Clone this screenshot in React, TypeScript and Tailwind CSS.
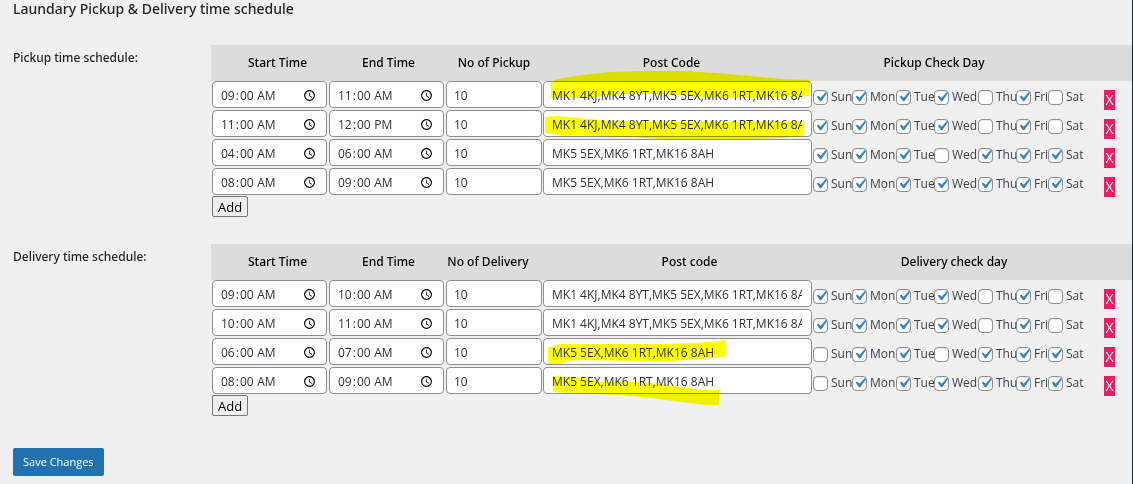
import {useId, useState} from "react";
import clsx from "clsx";

type Slot = {
    start: string,
    end: string,
    limit: string,
    postCodes: string,
    days: boolean[]
}

type Header = {
    label: string,
    className?: string
}

const DAYS = [ "Sun", "Mon", "Tue", "Wed", "Thu", "Fri", "Sat" ];

const ALL_CODES = "MK1 4KJ,MK4 8YT,MK5 5EX,MK6 1RT,MK16 8AH";
const SHORT_CODES = "MK5 5EX,MK6 1RT,MK16 8AH";

// "1101" -> [true, true, false, true]
const days = (mask: string) => mask.split("").map(c => c === "1");

const pickupSlots: Slot[] = [
    { start: "09:00", end: "11:00", limit: "10", postCodes: ALL_CODES, days: days("1111010") },
    { start: "11:00", end: "12:00", limit: "10", postCodes: ALL_CODES, days: days("1111010") },
    { start: "04:00", end: "06:00", limit: "10", postCodes: SHORT_CODES, days: days("1110111") },
    { start: "08:00", end: "09:00", limit: "10", postCodes: SHORT_CODES, days: days("1111111") },
];

const deliverySlots: Slot[] = [
    { start: "09:00", end: "10:00", limit: "10", postCodes: ALL_CODES, days: days("1111010") },
    { start: "10:00", end: "11:00", limit: "10", postCodes: ALL_CODES, days: days("1111010") },
    { start: "06:00", end: "07:00", limit: "10", postCodes: SHORT_CODES, days: days("0110111") },
    { start: "08:00", end: "09:00", limit: "10", postCodes: SHORT_CODES, days: days("0111111") },
];

const pickupHeaders: Header[] = [
    { label: "Start Time", className: "pl-4" },
    { label: "End Time", className: "pl-1" },
    { label: "No of Pickup" },
    { label: "Post Code", className: "pr-3" },
    { label: "Pickup Check Day", className: "pr-10" },
];

const deliveryHeaders: Header[] = [
    { label: "Start Time", className: "pl-4" },
    { label: "End Time", className: "pl-1" },
    { label: "No of Delivery", className: "pr-3" },
    { label: "Post code", className: "pl-6" },
    { label: "Delivery check day" },
];

// marker strokes, in pixels from the table's top left corner
const pickupMarks = [
    "M340 37 L346 34 L370 30 L400 27 L430 26 L475 26 L505 28 L540 31 L570 34 L599 35 V51 L540 53 L500 53 L470 50 L440 49 L410 49 L395 51 L380 53 H340 Z",
    "M334 72 L345 71 L368 73 L400 76 L440 77 L500 77 L593 76 V91 L570 93 L540 94 H450 L420 92 L380 91 L350 90 L334 88 Z",
];

const deliveryMarks = [
    "M337 104 L350 100 H450 L480 99 L500 98 L514 96 V113 L490 115 L460 117 L420 117 L370 116 L356 117 L350 120 L337 120 Z",
    "M342 132 L372 134 L390 138 L420 138 L440 139 L470 143 L490 146 L508 146 V161 L495 161 L470 158 L440 154 L410 151 L380 150 L342 148 Z",
];

const inputClass = "block h-[27px] w-full rounded-sm border border-[#8c8f94] bg-white pt-0.5 text-xs text-[#2c3338] outline-none focus:border-[#2271b1]";

function DayCheckbox({ label, checked, onChange }: { label: string, checked: boolean, onChange: () => void }) {
    return (
        <label className="flex items-center gap-[3px] whitespace-nowrap">
            <span className="grid shrink-0 place-items-center">
                <input
                    type="checkbox"
                    className="col-start-1 row-start-1 size-[15px] appearance-none rounded-sm border border-[#8c8f94] bg-white shadow-[inset_0_1px_2px_rgba(0,0,0,0.1)]"
                    checked={checked}
                    onChange={onChange}
                />
                {checked && (
                    <svg viewBox="0 0 20 20" className="pointer-events-none col-start-1 row-start-1 size-5 fill-[#3582c4] -m-1">
                        <path d="M14.83 4.89l1.34.94-5.81 8.38H9.02L5.78 9.67l1.34-1.25 2.57 2.4z" />
                    </svg>
                )}
            </span>
            {label}
        </label>
    );
}

function Schedule({ title, headers, initial, marks }: { title: string, headers: Header[], initial: Slot[], marks: string[] }) {

    const titleId = useId();
    const [ slots, setSlots ] = useState(initial);

    const update = (index: number, change: Partial<Slot>) => {
        setSlots(prev => prev.map((slot, i) => i === index ? { ...slot, ...change } : slot));
    };

    const addSlot = () => {
        setSlots(prev => [ ...prev, { start: "", end: "", limit: "", postCodes: "", days: days("0000000") } ]);
    };

    return (
        <section className="flex items-start">
            <h2 id={titleId} className="w-[198px] shrink-0 pt-[5px] font-['Noto_Sans',sans-serif] text-xs font-medium text-[#1d2327]">{title}</h2>

            <div className="relative min-w-0 flex-1">
                <table aria-labelledby={titleId} className="w-full table-fixed border-collapse text-xs">
                    <colgroup>
                        <col className="w-[117px]" />
                        <col className="w-[117px]" />
                        <col className="w-[98px]" />
                        <col className="w-[269px]" />
                        <col />
                        <col className="w-9" />
                    </colgroup>
                    <thead className="font-['Noto_Sans',sans-serif]">
                        <tr className="h-9 bg-[#dcdcdc] text-black">
                            {headers.map(header => (
                                <th key={header.label} className={clsx("font-medium whitespace-nowrap", header.className)}>
                                    {header.label}
                                </th>
                            ))}
                            <td></td>
                        </tr>
                    </thead>
                    <tbody>
                        {slots.map((slot, index) => (
                            <tr key={index} className="h-[29px] align-top">
                                <td className="px-px">
                                    <input
                                        type="time"
                                        aria-label="Start time"
                                        className={clsx(inputClass, "pr-[7px] pl-[7px]")}
                                        value={slot.start}
                                        onChange={e => update(index, { start: e.currentTarget.value })}
                                    />
                                </td>
                                <td className="px-px">
                                    <input
                                        type="time"
                                        aria-label="End time"
                                        className={clsx(inputClass, "pr-[7px] pl-[7px]")}
                                        value={slot.end}
                                        onChange={e => update(index, { end: e.currentTarget.value })}
                                    />
                                </td>
                                <td className="px-px">
                                    <input
                                        type="text"
                                        aria-label="Limit"
                                        className={clsx(inputClass, "pr-[7px] pl-[7px]")}
                                        value={slot.limit}
                                        onChange={e => update(index, { limit: e.currentTarget.value })}
                                    />
                                </td>
                                <td>
                                    <input
                                        type="text"
                                        aria-label="Post codes"
                                        className={clsx(inputClass, "pr-[9px] pl-2")}
                                        value={slot.postCodes}
                                        onChange={e => update(index, { postCodes: e.currentTarget.value })}
                                    />
                                </td>
                                <td className="px-px pt-2">
                                    <div className="grid grid-cols-[39px_44px_38px_44px_38px_32px_auto] text-[#3c434a]">
                                        {DAYS.map((day, d) => (
                                            <DayCheckbox
                                                key={day}
                                                label={day}
                                                checked={slot.days[d]}
                                                onChange={() => update(index, { days: slot.days.map((on, i) => i === d ? !on : on) })}
                                            />
                                        ))}
                                    </div>
                                </td>
                                <td className="px-2 pt-[9px]">
                                    <button
                                        type="button"
                                        className="block h-5 w-[11px] bg-[#e91e63] text-center text-sm leading-[18px] font-medium text-white hover:cursor-pointer"
                                        onClick={() => setSlots(prev => prev.filter((_, i) => i !== index))}
                                    >
                                        X
                                    </button>
                                </td>
                            </tr>
                        ))}
                    </tbody>
                </table>
                <button
                    type="button"
                    className="-mt-px ml-px block h-[21px] rounded-xs border border-[#767676] bg-[#efefef] px-[5px] text-[13px] leading-5 text-black hover:cursor-pointer"
                    onClick={addSlot}
                >
                    Add
                </button>

                <svg className="pointer-events-none absolute top-0 left-0 h-full w-[620px] overflow-visible fill-[#ffff00] mix-blend-multiply">
                    {marks.map(d => <path key={d} d={d} />)}
                </svg>
            </div>
        </section>
    );
}

export default function App() {
    return (
        <main className="min-h-screen border-r border-[#1d2327] bg-[#f0f0f0] pl-[13px] font-['Open_Sans','Noto_Sans',sans-serif]">
            <h1 className="font-['Noto_Sans',sans-serif] text-sm leading-[18px] font-medium text-[#1d2327]">Laundary Pickup &amp; Delivery time schedule</h1>

            <form className="flex flex-col gap-[27px] pt-[27px]" onSubmit={e => e.preventDefault()}>
                <Schedule title="Pickup time schedule:" headers={pickupHeaders} initial={pickupSlots} marks={pickupMarks} />
                <Schedule title="Delivery time schedule:" headers={deliveryHeaders} initial={deliverySlots} marks={deliveryMarks} />

                <button
                    type="submit"
                    className="mt-[5px] h-7 self-start rounded-xs bg-[#2271b1] px-[10px] text-[11px] text-white hover:cursor-pointer hover:bg-[#135e96]"
                >
                    Save Changes
                </button>
            </form>
        </main>
    );
}
